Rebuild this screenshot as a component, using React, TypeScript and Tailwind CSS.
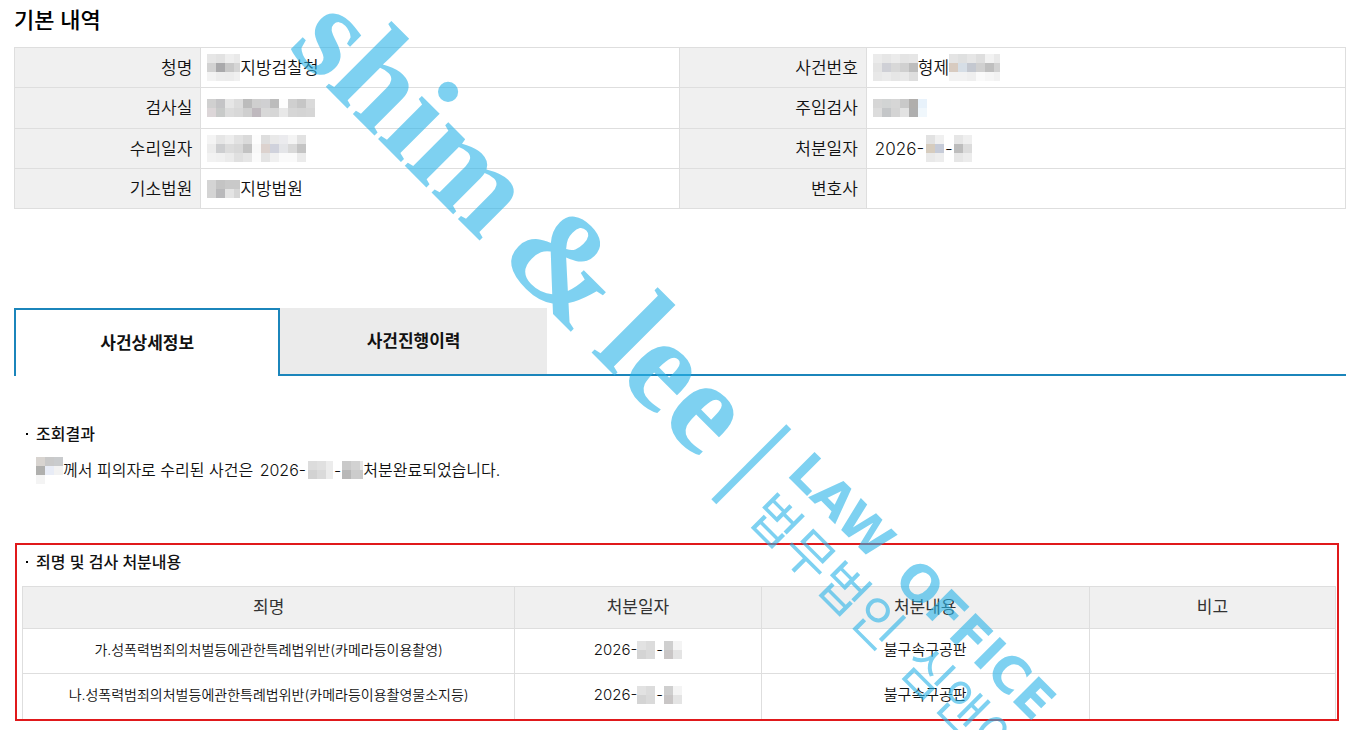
import React, { useState } from 'react';

type Blocks = string[][];

const BLOCK = 9;

// Redacted values, one colour per 9px block
const MASKS: Record<string, Blocks> = {
  office: [
    ['#e6e6e6', '#e2e2e2', '#eeeeee', '#e9e9e9'],
    ['#d2d2d2', '#a9a9ab', '#c8c8c8', '#d5d5d5'],
    ['#f3f3f3', '#ededed', '#ececec', '#f0f0f0'],
  ],
  room: [
    ['#d0d0d0', '#c4c4c6', '#e6e6e6', '#dcdcdc', '#bcbcbc', '#cfcfcf', '#d0d0d2', '#bcbcbc', '#fdfdfd', '#cfcfcf', '#c6c6c6', '#dadada'],
    ['#dcd6d8', '#c8cac9', '#dcdcdc', '#d8d8d8', '#cfcfcf', '#bfb9be', '#d8d8d8', '#d6d6d6', '#e8e8e8', '#d6d6d6', '#d4d4d4', '#d6d6d6'],
  ],
  received: [
    ['#f4f4f4', '#e6e6e6', '#ededed', '#e2e2e2', '#dadada', '#fdfdfd', '#dedede', '#e9e9e9', '#ebebee', '#f4f4f4', '#e2e2e2'],
    ['#ececec', '#cdced0', '#dcdcdc', '#d8d8d8', '#c3c3c3', '#f8f8f8', '#dcd2ce', '#d0d2dc', '#e4e5e8', '#d9d9d9', '#c4c4c4'],
    ['#f2f2f2', '#f0f0f0', '#ebebeb', '#e0e0e0', '#e6e6e6', '#fbfbfb', '#e4e4e4', '#f0f0f0', '#fafafa', '#fafafa', '#ebebeb'],
  ],
  court: [
    ['#d4d4d4', '#c4c4c4', '#c9c9c9', '#c9c9c9'],
    ['#d4d4d4', '#b9b9bb', '#e4e4e4', '#d6d6d6'],
  ],
  caseYear: [
    ['#ebebeb', '#e6e6e6', '#ebebeb', '#e4e4e4', '#e6e6e6'],
    ['#e4e4e4', '#cfd0d6', '#d8d8d8', '#d0d0d0', '#bdbdbd'],
    ['#e8e8e8', '#ebebeb', '#e6e6e6', '#e9e9e9', '#dedede'],
  ],
  caseSerial: [
    ['#e4e4e4', '#dfe0e0', '#e6e6e6', '#dedede', '#f2f2f2', '#e9e9e9'],
    ['#d8cbc0', '#d6dee6', '#c4c8d0', '#d0d0d0', '#bfbfbf', '#d2d2d2'],
    ['#f2f2f2', '#f2f2f2', '#efefef', '#fafafa', '#f6f6f6', '#f2f2f2'],
  ],
  prosecutor: [
    ['#d6d6d6', '#d2d4d4', '#d6d6d6', '#c9c9c9', '#b0aeac', '#e8f2fb'],
    ['#dcdcdc', '#c4c6c8', '#d4d4d4', '#e2e2e2', '#aeaeae', '#f0f7fc'],
  ],
  month: [
    ['#e2e2e2', '#f0f0f0'],
    ['#d6ccbe', '#c6cbd8'],
    ['#e9e9e9', '#ededed'],
  ],
  day: [
    ['#e6e6e6', '#efefef'],
    ['#bdbdbd', '#dcdcdc'],
    ['#e6e6e6', '#ececec'],
  ],
  person: [
    ['#d8d4d0', '#c9c9c9', '#c9cbcd'],
    ['#b0b0ae', '#e8ecf6', '#f2f2f2'],
    ['#f4f4f4', '#ffffff', '#ffffff'],
  ],
  resultMonth: [
    ['#dcdcdc', '#e0e0e0', '#ececec'],
    ['#d2d2d2', '#dadada', '#ececec'],
  ],
  resultDay: [
    ['#c9c9c9', '#d2d2d2', '#e6e6e6'],
    ['#b8b8b8', '#cccccc', '#c9c9c9'],
  ],
  rowMonth: [
    ['#e2e2e2', '#dcdcdc'],
    ['#d4d4d4', '#dadada'],
  ],
  rowDay: [
    ['#cfcfcf', '#f4f4f4'],
    ['#c9c6c6', '#e4e4e4'],
  ],
};

// width cuts the last column short
const Mask: React.FC<{ name: string; width?: number }> = ({ name, width }) => {
  const rows = MASKS[name];
  return (
    <svg
      width={width ?? rows[0].length * BLOCK}
      height={rows.length * BLOCK}
      shapeRendering="crispEdges"
      className="shrink-0"
      aria-hidden="true"
    >
      {rows.map((row, y) =>
        row.map((fill, x) => (
          <rect key={`${x}-${y}`} x={x * BLOCK} y={y * BLOCK} width={BLOCK} height={BLOCK} fill={fill} />
        )),
      )}
    </svg>
  );
};

const InfoHead: React.FC<{ children: React.ReactNode }> = ({ children }) => (
  <th scope="row" className="w-[14%] border border-[#dedede] bg-[#f0f0f0] pr-2 text-right font-[350]">
    {children}
  </th>
);

const InfoCell: React.FC<{ children?: React.ReactNode }> = ({ children }) => (
  <td className="w-[36%] border border-[#dedede] px-1.5">
    <div className="flex items-center">{children}</div>
  </td>
);

const Bullet: React.FC<{ children: React.ReactNode }> = ({ children }) => (
  <h2 className="flex items-center gap-2 pl-3 text-base leading-6 font-medium">
    <span className="size-0.5 bg-black" />
    {children}
  </h2>
);

const CHARGES = [
  { name: '가.성폭력범죄의처벌등에관한특례법위반(카메라등이용촬영)', result: '불구속구공판' },
  { name: '나.성폭력범죄의처벌등에관한특례법위반(카메라등이용촬영물소지등)', result: '불구속구공판' },
];

const TABS = ['사건상세정보', '사건진행이력'];

const Watermark: React.FC = () => (
  <svg className="pointer-events-none absolute inset-0 size-full overflow-hidden" aria-hidden="true">
    <g transform="rotate(45)" fill="#29b4e8" opacity="0.6">
      <g className="font-['Liberation_Serif',serif] text-[134px] font-bold">
        <text x="236" y="-169">shim</text>
        <text x="533" y="-169">&amp;</text>
        <text x="665" y="-169">lee</text>
      </g>
      <rect x="856" y="-256" width="7" height="106" />
      <g className="font-['DejaVu_Sans',sans-serif] text-[50px] font-bold">
        <text x="891" y="-220">LAW</text>
        <text x="1042" y="-220">OFFICE</text>
      </g>
      <g className="font-['Noto_Sans_CJK_KR',sans-serif] text-[52px] font-normal">
        <text x="893" y="-161">법무법인</text>
        <text x="1107" y="-161">심앤이</text>
      </g>
    </g>
  </svg>
);

const App: React.FC = () => {
  const [active, setActive] = useState(0);

  return (
    <div className="relative min-h-screen overflow-hidden bg-white pr-1 pl-3.5 font-['Inter','Noto_Sans_CJK_KR',sans-serif] text-[#111]">
      <h1 className="h-[47px] text-[22px] leading-10 font-medium text-black">기본 내역</h1>

      <table className="w-full table-fixed border-collapse text-[17px] leading-6 font-[350]">
        <tbody>
          <tr className="h-10">
            <InfoHead>청명</InfoHead>
            <InfoCell><Mask name="office" width={33} />지방검찰청</InfoCell>
            <InfoHead>사건번호</InfoHead>
            <InfoCell><Mask name="caseYear" />형제<Mask name="caseSerial" width={51} /></InfoCell>
          </tr>
          <tr className="h-[41px]">
            <InfoHead>검사실</InfoHead>
            <InfoCell><Mask name="room" /></InfoCell>
            <InfoHead>주임검사</InfoHead>
            <InfoCell><Mask name="prosecutor" /></InfoCell>
          </tr>
          <tr className="h-10">
            <InfoHead>수리일자</InfoHead>
            <InfoCell><Mask name="received" /></InfoCell>
            <InfoHead>처분일자</InfoHead>
            <InfoCell>
              <span className="px-0.5">2026-</span>
              <Mask name="month" />
              <span className="px-px">-</span>
              <Mask name="day" />
            </InfoCell>
          </tr>
          <tr className="h-10">
            <InfoHead>기소법원</InfoHead>
            <InfoCell><Mask name="court" width={33} />지방법원</InfoCell>
            <InfoHead>변호사</InfoHead>
            <InfoCell />
          </tr>
        </tbody>
      </table>

      <div role="tablist" className="mt-[99px] flex h-[68px]">
        {TABS.map((tab, i) => (
          <button
            key={tab}
            type="button"
            role="tab"
            aria-selected={active === i}
            onClick={() => setActive(i)}
            className={
              active === i
                ? 'w-1/5 border-2 border-b-0 border-[#1b85bb] bg-white pt-0.5 text-[17px] font-bold'
                : 'w-1/5 border-b-2 border-[#1b85bb] bg-[#ebebeb] pt-0.5 text-[17px] font-bold'
            }
          >
            {tab}
          </button>
        ))}
        <div className="flex-1 border-b-2 border-[#1b85bb]" />
      </div>

      <section className="mt-[46px]">
        <Bullet>조회결과</Bullet>
        <p className="mt-3 flex h-6 items-center pl-[22px] text-base leading-6 font-[350] whitespace-pre">
          <Mask name="person" />
          <span>께서 피의자로 수리된 사건은 </span>
          <span className="px-0.5">2026-</span>
          <Mask name="resultMonth" width={25} />
          <span className="px-px">-</span>
          <Mask name="resultDay" width={21} />
          <span>처분완료되었습니다.</span>
        </p>
      </section>

      <section className="mt-[61px] mr-[7px] ml-px border-2 border-[#e0191b] pt-[5px] pr-px pl-[5px]">
        <div className="-ml-2">
          <Bullet>죄명 및 검사 처분내용</Bullet>
        </div>
        <table className="mt-3 w-full table-fixed border-collapse text-center leading-6">
          <thead>
            <tr className="h-[42px] bg-[#f0f0f0] text-[17px] text-[#333]">
              <th className="w-[37.5%] border border-[#dedede] pb-0.5 font-normal">죄명</th>
              <th className="w-[18.75%] border border-[#dedede] pb-0.5 font-normal">처분일자</th>
              <th className="w-[25%] border border-[#dedede] pb-0.5 font-normal">처분내용</th>
              <th className="w-[18.75%] border border-[#dedede] pb-0.5 font-normal">비고</th>
            </tr>
          </thead>
          <tbody>
            {CHARGES.map((charge) => (
              <tr key={charge.name} className="h-[45px] text-[15px] font-[350]">
                <td className="border border-b-0 border-[#dedede] pb-0.5 text-sm">{charge.name}</td>
                <td className="border border-b-0 border-[#dedede] pb-0.5">
                  <div className="flex items-center justify-center">
                    <span>2026-</span>
                    <Mask name="rowMonth" />
                    <span className="px-px">-</span>
                    <Mask name="rowDay" />
                  </div>
                </td>
                <td className="border border-b-0 border-[#dedede] pb-0.5">{charge.result}</td>
                <td className="border border-b-0 border-[#dedede]" />
              </tr>
            ))}
          </tbody>
        </table>
      </section>

      <Watermark />
    </div>
  );
};

export default App;
